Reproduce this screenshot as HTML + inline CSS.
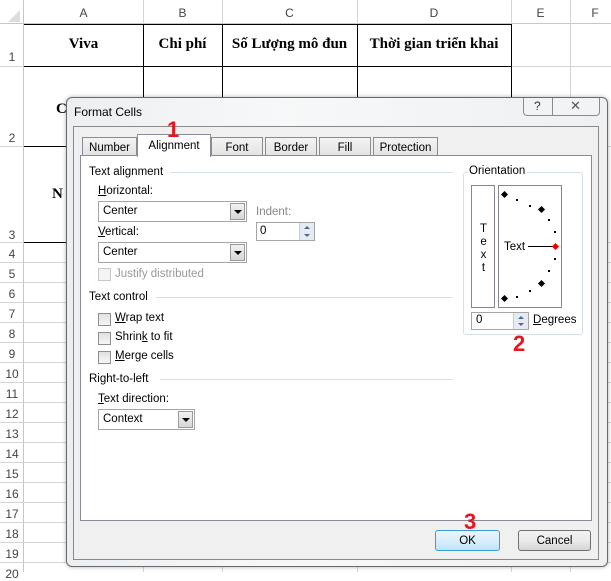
<!DOCTYPE html>
<html><head><meta charset="utf-8"><style>
*{box-sizing:border-box;margin:0;padding:0}
body{width:611px;height:572px;overflow:hidden;background:#fff;position:relative;font-family:"Liberation Sans",sans-serif;font-size:11.5px;color:#000}
.a{position:absolute}
.hl{position:absolute;height:1px;background:#d4d4d4}
.vl{position:absolute;width:1px;background:#d4d4d4}
.bl{position:absolute;background:#000}
.ch{position:absolute;top:0;height:24px;line-height:26px;text-align:center;color:#444;font-size:12px}
.rh{position:absolute;left:0;width:24px;text-align:center;color:#444;font-size:12px}
.bt{position:absolute;font-family:"Liberation Serif",serif;font-weight:bold;font-size:15px;text-align:center}
.t{position:absolute;font-size:11.5px;white-space:nowrap}
.grp{position:absolute;height:1px;background:#d5dfe5}
.cb{position:absolute;width:13px;height:13px;border:1px solid #8f8f8f;background:linear-gradient(#e0e0e0,#f6f6f6)}
.sel{position:absolute;height:21px;border:1px solid #a5a5a5;background:#fff;padding:3px 0 0 4px}
.dd{position:absolute;right:1px;top:1px;width:15px;height:17px;border:1px solid #9a9a9a;background:linear-gradient(#f2f2f2,#d6d6d6)}
.dd:after{content:"";position:absolute;left:3px;top:6px;border-left:4px solid transparent;border-right:4px solid transparent;border-top:4px solid #000}
.tab{position:absolute;top:137px;height:19px;border:1px solid #898c95;border-bottom:none;background:linear-gradient(#f3f3f3,#e3e3e3);text-align:center;line-height:20px;font-size:11.5px}
.red{position:absolute;color:#e8141e;font-weight:bold;font-family:"Liberation Sans",sans-serif}
.dot{position:absolute;width:2px;height:2px;background:#000}
.dia{position:absolute;width:5px;height:5px;background:#000;transform:rotate(45deg)}
u{text-decoration:underline}
</style></head><body>
<div class="a" style="left:0;top:0;width:611px;height:24px;background:#fff;border-bottom:1px solid #c6c6c6"></div>
<div class="a" style="left:0;top:0;width:24px;height:572px;border-right:1px solid #c6c6c6"></div>
<div class="a" style="left:8px;top:10px;border-left:12px solid transparent;border-bottom:12px solid #dcdcdc"></div>
<div class="ch" style="left:24px;width:119px">A</div>
<div class="ch" style="left:143px;width:79px">B</div>
<div class="ch" style="left:222px;width:135px">C</div>
<div class="ch" style="left:357px;width:154px">D</div>
<div class="ch" style="left:511px;width:59px">E</div>
<div class="ch" style="left:570px;width:50px">F</div>
<div class="vl" style="left:143px;top:0;height:24px"></div><div class="vl" style="left:222px;top:0;height:24px"></div><div class="vl" style="left:357px;top:0;height:24px"></div><div class="vl" style="left:511px;top:0;height:24px"></div><div class="vl" style="left:570px;top:0;height:572px"></div><div class="vl" style="left:511px;top:24px;height:548px"></div>
<div class="vl" style="left:143px;top:243px;height:329px"></div><div class="vl" style="left:222px;top:243px;height:329px"></div><div class="vl" style="left:357px;top:243px;height:329px"></div>
<div class="rh" style="top:50px">1</div>
<div class="rh" style="top:131px">2</div>
<div class="rh" style="top:228px">3</div>
<div class="rh" style="top:247px">4</div><div class="rh" style="top:267px">5</div><div class="rh" style="top:287px">6</div><div class="rh" style="top:307px">7</div><div class="rh" style="top:327px">8</div><div class="rh" style="top:347px">9</div><div class="rh" style="top:367px">10</div><div class="rh" style="top:387px">11</div><div class="rh" style="top:407px">12</div><div class="rh" style="top:427px">13</div><div class="rh" style="top:447px">14</div><div class="rh" style="top:467px">15</div><div class="rh" style="top:487px">16</div><div class="rh" style="top:507px">17</div><div class="rh" style="top:527px">18</div><div class="rh" style="top:547px">19</div><div class="rh" style="top:567px">20</div>
<div class="hl" style="left:0;top:66px;width:611px"></div><div class="hl" style="left:0;top:146px;width:611px"></div><div class="hl" style="left:0;top:242px;width:611px"></div>
<div class="hl" style="left:0;top:262px;width:611px"></div><div class="hl" style="left:0;top:282px;width:611px"></div><div class="hl" style="left:0;top:302px;width:611px"></div><div class="hl" style="left:0;top:322px;width:611px"></div><div class="hl" style="left:0;top:342px;width:611px"></div><div class="hl" style="left:0;top:362px;width:611px"></div><div class="hl" style="left:0;top:382px;width:611px"></div><div class="hl" style="left:0;top:402px;width:611px"></div><div class="hl" style="left:0;top:422px;width:611px"></div><div class="hl" style="left:0;top:442px;width:611px"></div><div class="hl" style="left:0;top:462px;width:611px"></div><div class="hl" style="left:0;top:482px;width:611px"></div><div class="hl" style="left:0;top:502px;width:611px"></div><div class="hl" style="left:0;top:522px;width:611px"></div><div class="hl" style="left:0;top:542px;width:611px"></div><div class="hl" style="left:0;top:562px;width:611px"></div>
<div class="bl" style="left:24px;top:24px;width:488px;height:1px"></div>
<div class="bl" style="left:24px;top:66px;width:488px;height:1px"></div>
<div class="bl" style="left:24px;top:146px;width:50px;height:1px"></div>
<div class="bl" style="left:24px;top:242px;width:50px;height:1px"></div>
<div class="bl" style="left:143px;top:24px;width:1px;height:76px"></div>
<div class="bl" style="left:222px;top:24px;width:1px;height:76px"></div>
<div class="bl" style="left:357px;top:24px;width:1px;height:76px"></div>
<div class="bl" style="left:511px;top:24px;width:1px;height:76px"></div>
<div class="bt" style="left:24px;top:36px;width:119px">Viva</div>
<div class="bt" style="left:143px;top:36px;width:79px">Chi phí</div>
<div class="bt" style="left:222px;top:36px;width:135px">Số Lượng mô đun</div>
<div class="bt" style="left:357px;top:36px;width:154px">Thời gian triển khai</div>
<div class="bt" style="left:56px;top:101px">C</div>
<div class="bt" style="left:52px;top:186px">N</div>
<div class="a" style="left:66px;top:97px;width:542px;height:470px;border:1px solid #6a6a6a;border-radius:6px;background:linear-gradient(90deg,#eceff2,#f7f8f9 40%,#eef0f2);box-shadow:0 0 4px rgba(0,0,0,.3)"></div>
<div class="t" style="left:74px;top:105px;font-size:12px">Format Cells</div>
<div class="a" style="left:523px;top:98px;width:77px;height:18px;border:1px solid #8a8a8a;border-top:none;border-radius:0 0 4px 4px;background:#f1f3f5"></div>
<div class="a" style="left:552px;top:98px;width:1px;height:18px;background:#8a8a8a"></div>
<div class="t" style="left:534px;top:99px;font-size:12px;color:#333">?</div>
<div class="t" style="left:570px;top:98px;font-size:13px;color:#555">✕</div>
<div class="a" style="left:73px;top:126px;width:526px;height:434px;border:1px solid #8a8a8a;background:#f0f0f0"></div>
<div class="tab" style="left:82px;width:55px">Number</div>
<div class="tab" style="left:211px;width:52px">Font</div>
<div class="tab" style="left:265px;width:52px">Border</div>
<div class="tab" style="left:319px;width:52px">Fill</div>
<div class="tab" style="left:373px;width:65px">Protection</div>
<div class="a" style="left:80px;top:155px;width:512px;height:366px;border:1px solid #898c95;background:#fff"></div>
<div class="a" style="left:137px;top:134px;width:74px;height:23px;border:1px solid #898c95;border-bottom:none;background:#fff;text-align:center;line-height:22px">Alignment</div>
<div class="red" style="left:167px;top:117px;font-size:22px">1</div>
<div class="t" style="left:89px;top:166px">Text alignment</div><div class="grp" style="left:170px;top:172px;width:283px"></div>
<div class="t" style="left:98px;top:185px"><u>H</u>orizontal:</div>
<div class="sel" style="left:98px;top:201px;width:149px">Center<div class="dd"></div></div>
<div class="t" style="left:256px;top:206px;color:#888">Indent:</div>
<div class="a" style="left:256px;top:222px;width:59px;height:19px;border:1px solid #a5a5a5;background:#fff;padding:2px 0 0 3px">0</div>
<div class="a" style="left:299px;top:223px;width:15px;height:17px;background:#e6ebf2;border-left:1px solid #ccc"><div class="a" style="left:4px;top:3px;border-left:3px solid transparent;border-right:3px solid transparent;border-bottom:3px solid #4a6a9a"></div><div class="a" style="left:4px;top:11px;border-left:3px solid transparent;border-right:3px solid transparent;border-top:3px solid #4a6a9a"></div></div>
<div class="t" style="left:98px;top:226px"><u>V</u>ertical:</div>
<div class="sel" style="left:98px;top:242px;width:149px">Center<div class="dd"></div></div>
<div class="cb" style="left:98px;top:268px;border-color:#c8c8c8;background:#f4f4f4"></div><div class="t" style="left:115px;top:268px;color:#999">Justify distributed</div>
<div class="t" style="left:89px;top:291px">Text control</div><div class="grp" style="left:156px;top:297px;width:297px"></div>
<div class="cb" style="left:98px;top:313px"></div><div class="t" style="left:115px;top:312px"><u>W</u>rap text</div>
<div class="cb" style="left:98px;top:332px"></div><div class="t" style="left:115px;top:331px">Shrin<u>k</u> to fit</div>
<div class="cb" style="left:98px;top:351px"></div><div class="t" style="left:115px;top:350px"><u>M</u>erge cells</div>
<div class="t" style="left:89px;top:373px">Right-to-left</div><div class="grp" style="left:160px;top:379px;width:293px"></div>
<div class="t" style="left:98px;top:393px"><u>T</u>ext direction:</div>
<div class="sel" style="left:98px;top:409px;width:97px">Context<div class="dd"></div></div>
<div class="a" style="left:463px;top:172px;width:120px;height:163px;border:1px solid #d5dfe5;border-radius:3px"></div>
<div class="t" style="left:468px;top:165px;background:#fff;padding:0 2px 0 1px">Orientation</div>
<div class="a" style="left:471px;top:185px;width:24px;height:123px;border:1px solid #828790"></div>
<div class="t" style="left:480px;top:223px;line-height:13px;text-align:center">T<br>e<br>x<br>t</div>
<div class="a" style="left:498px;top:185px;width:64px;height:123px;border:1px solid #828790"></div>
<div class="t" style="left:504px;top:241px">Text</div>
<div class="a" style="left:528px;top:246px;width:26px;height:1px;background:#000"></div>
<div class="dia" style="left:553px;top:244px;background:#e00"></div>
<div class="dia" style="left:502px;top:192px"></div><div class="dia" style="left:539px;top:207px"></div><div class="dia" style="left:539px;top:281px"></div><div class="dia" style="left:502px;top:296px"></div>
<div class="dot" style="left:516px;top:199px"></div><div class="dot" style="left:529px;top:205px"></div><div class="dot" style="left:548px;top:219px"></div><div class="dot" style="left:554px;top:231px"></div><div class="dot" style="left:554px;top:258px"></div><div class="dot" style="left:548px;top:270px"></div><div class="dot" style="left:529px;top:290px"></div><div class="dot" style="left:516px;top:296px"></div>
<div class="a" style="left:471px;top:312px;width:58px;height:18px;border:1px solid #a5a5a5;background:#fff;padding:1px 0 0 4px">0</div>
<div class="a" style="left:513px;top:313px;width:15px;height:16px;background:#e6ebf2;border-left:1px solid #ccc"><div class="a" style="left:4px;top:3px;border-left:3px solid transparent;border-right:3px solid transparent;border-bottom:3px solid #4a6a9a"></div><div class="a" style="left:4px;top:10px;border-left:3px solid transparent;border-right:3px solid transparent;border-top:3px solid #4a6a9a"></div></div>
<div class="t" style="left:533px;top:314px"><u>D</u>egrees</div>
<div class="red" style="left:513px;top:331px;font-size:22px">2</div>
<div class="a" style="left:435px;top:530px;width:65px;height:21px;border:1px solid #3c9cd6;border-radius:3px;background:linear-gradient(#eaf6fd,#d9eefa 50%,#bee6fd);text-align:center;line-height:20px">OK</div>
<div class="a" style="left:518px;top:530px;width:73px;height:21px;border:1px solid #707070;border-radius:3px;background:linear-gradient(#f2f2f2,#ebebeb 50%,#d5d5d5);text-align:center;line-height:20px">Cancel</div>
<div class="red" style="left:464px;top:509px;font-size:22px">3</div>
</body></html>
